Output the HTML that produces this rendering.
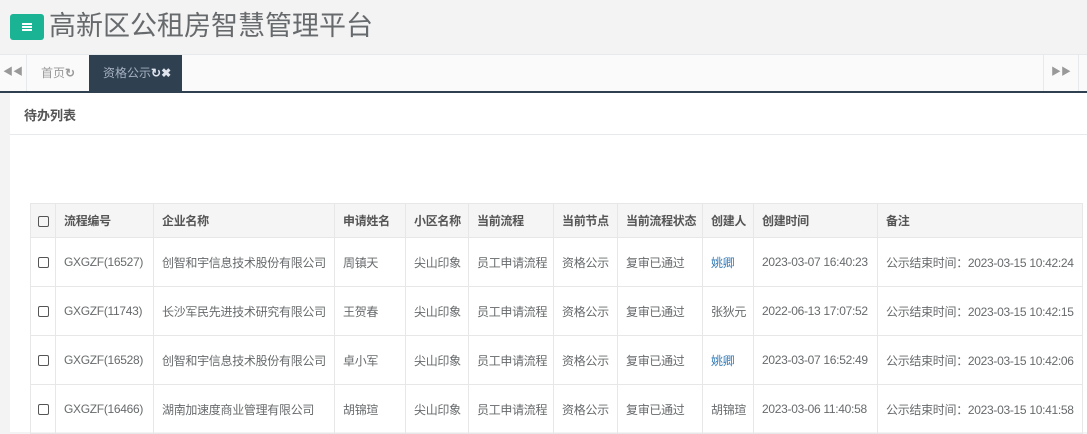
<!DOCTYPE html>
<html><head><meta charset="utf-8"><style>
*{box-sizing:border-box;margin:0;padding:0}
body{width:1087px;height:432px;overflow:hidden;background:#f3f3f4;font-family:"Liberation Sans","Noto Sans CJK SC",sans-serif;color:#676a6c;font-size:12px;position:relative}
.hdr{position:absolute;left:0;top:0;width:1087px;height:55px;background:#f3f3f4;border-bottom:1px solid #e7eaec}
.btn{position:absolute;left:10px;top:14px;width:34px;height:26px;background:#1ab394;border-radius:3px}
.btn i{position:absolute;left:12px;width:10px;height:2px;background:#fff}
.title{position:absolute;left:49px;top:8px;font-size:27px;color:#676a6c;line-height:36px;letter-spacing:0}
.tabs{position:absolute;left:0;top:55px;width:1087px;height:38px;background:#fafafa;border-bottom:2px solid #2f4050}
.tab{position:absolute;top:0;height:36px;line-height:36px;font-size:12px}
.panel{position:absolute;left:10px;top:93px;width:1077px;height:339px;background:#fff}
table{position:absolute;left:20px;top:110px;border-collapse:collapse;font-size:12px;table-layout:fixed;width:1052px}
td,th{border:1px solid #e7e7e7;padding:0 0 0 8px;text-align:left;white-space:nowrap;overflow:hidden;letter-spacing:-0.3px}
th{background:#f5f5f6;height:34px;font-weight:bold;color:#555}
td{height:49px;color:#676a6c}
.cb{display:inline-block;width:11px;height:11px;border:1px solid #555;border-radius:2px;vertical-align:middle}
.blue{color:#337ab7}
</style></head><body>
<div class="hdr"><div class="btn"><i style="top:9px"></i><i style="top:12px"></i><i style="top:15px"></i></div>
<div class="title">高新区公租房智慧管理平台</div></div>
<div class="tabs">
<div class="tab" style="left:0;width:27px;border-right:1px solid #e7eaec;text-align:center;color:#999;font-size:10px">◀◀</div>
<div class="tab" style="left:41px;color:#999">首页<b>↻</b></div>
<div class="tab" style="left:89px;width:93px;background:#2f4050;color:#a7b1c2;padding-left:14px">资格公示<b style="color:#dfe4ed">↻✖</b></div>
<div class="tab" style="left:1043px;width:36px;border-left:1px solid #e7eaec;border-right:1px solid #e7eaec;text-align:center;color:#999;font-size:10px">▶▶</div>
</div>
<div class="panel">
<div style="position:absolute;left:14px;top:12px;font-weight:bold;font-size:13px;color:#555">待办列表</div>
<div style="position:absolute;left:0;top:41px;width:1077px;height:1px;background:#e7eaec"></div>
<table>
<colgroup><col style="width:25px"><col style="width:98px"><col style="width:181px"><col style="width:71px"><col style="width:63px"><col style="width:85px"><col style="width:64px"><col style="width:85px"><col style="width:51px"><col style="width:124px"><col style="width:205px"></colgroup>
<tr><th style="padding-left:7px"><span class="cb"></span></th><th>流程编号</th><th>企业名称</th><th>申请姓名</th><th>小区名称</th><th>当前流程</th><th>当前节点</th><th>当前流程状态</th><th>创建人</th><th>创建时间</th><th>备注</th></tr>
<tr><td style="padding-left:7px"><span class="cb"></span></td><td>GXGZF(16527)</td><td>创智和宇信息技术股份有限公司</td><td>周镇天</td><td>尖山印象</td><td>员工申请流程</td><td>资格公示</td><td>复审已通过</td><td class="blue">姚卿</td><td>2023-03-07 16:40:23</td><td>公示结束时间：2023-03-15 10:42:24</td></tr>
<tr><td style="padding-left:7px"><span class="cb"></span></td><td>GXGZF(11743)</td><td>长沙军民先进技术研究有限公司</td><td>王贺春</td><td>尖山印象</td><td>员工申请流程</td><td>资格公示</td><td>复审已通过</td><td>张狄元</td><td>2022-06-13 17:07:52</td><td>公示结束时间：2023-03-15 10:42:15</td></tr>
<tr><td style="padding-left:7px"><span class="cb"></span></td><td>GXGZF(16528)</td><td>创智和宇信息技术股份有限公司</td><td>卓小军</td><td>尖山印象</td><td>员工申请流程</td><td>资格公示</td><td>复审已通过</td><td class="blue">姚卿</td><td>2023-03-07 16:52:49</td><td>公示结束时间：2023-03-15 10:42:06</td></tr>
<tr><td style="padding-left:7px"><span class="cb"></span></td><td>GXGZF(16466)</td><td>湖南加速度商业管理有限公司</td><td>胡锦瑄</td><td>尖山印象</td><td>员工申请流程</td><td>资格公示</td><td>复审已通过</td><td>胡锦瑄</td><td>2023-03-06 11:40:58</td><td>公示结束时间：2023-03-15 10:41:58</td></tr>
</table>
</div>
</body></html>
